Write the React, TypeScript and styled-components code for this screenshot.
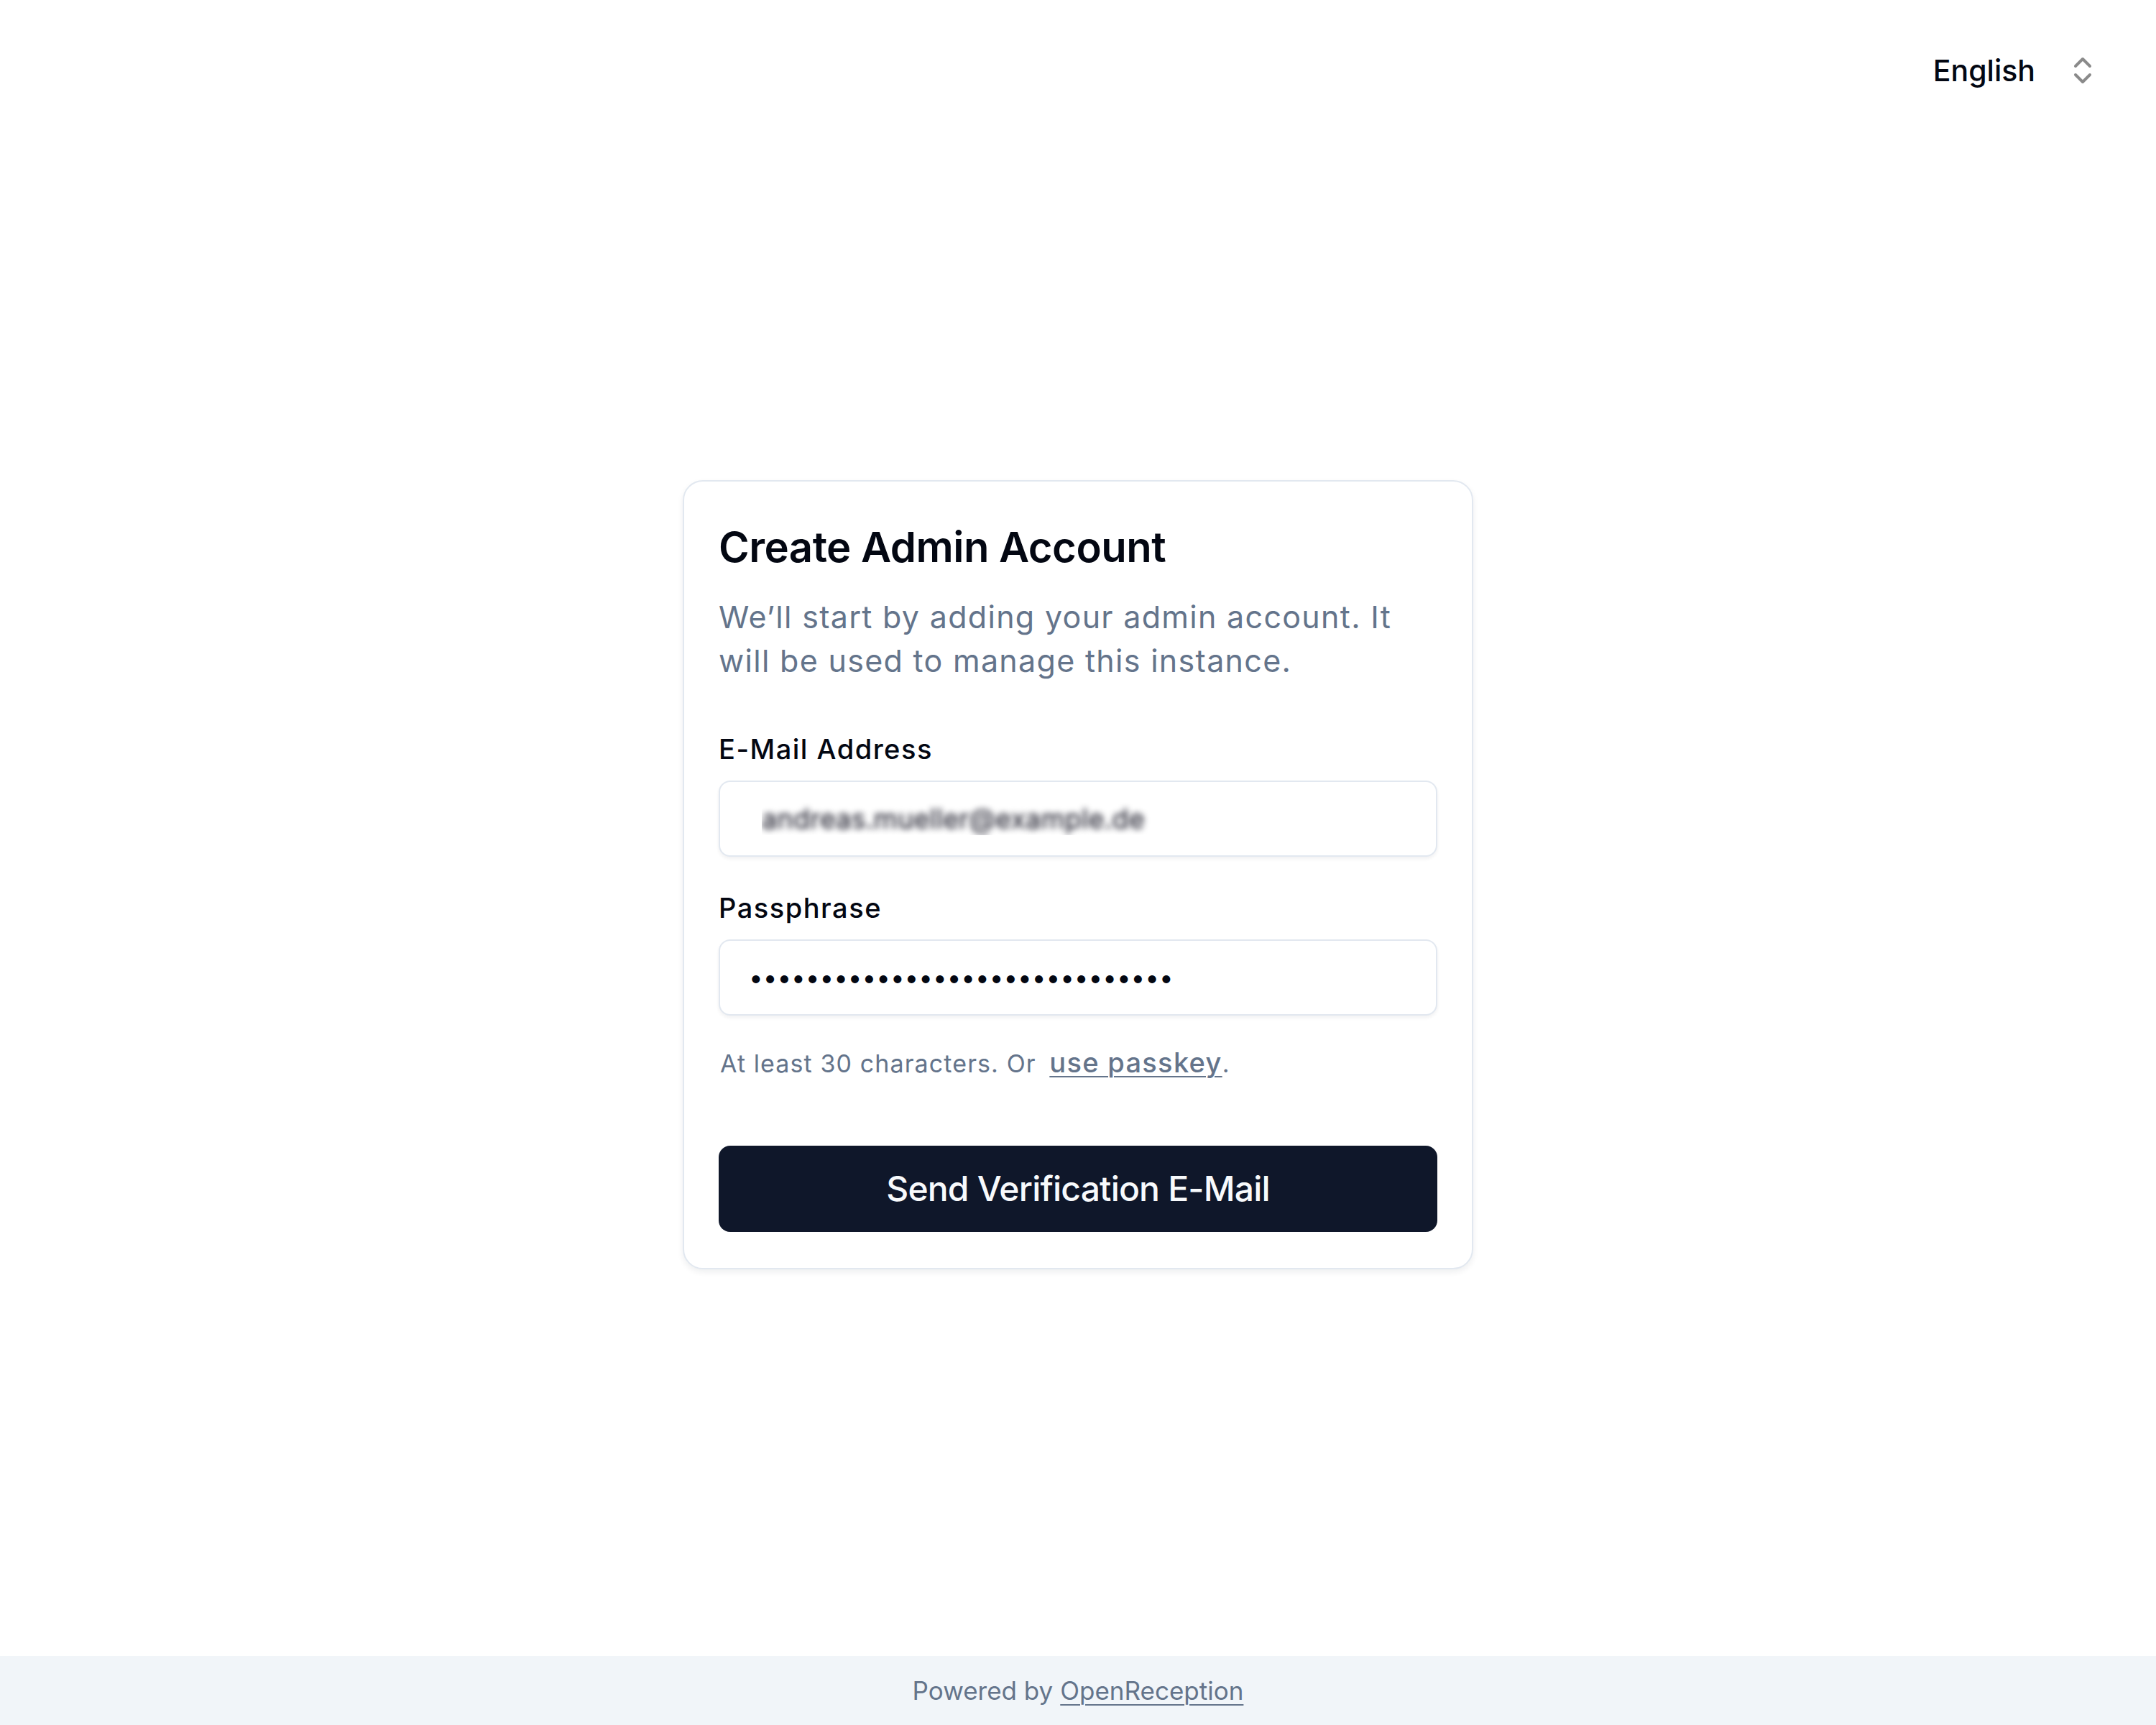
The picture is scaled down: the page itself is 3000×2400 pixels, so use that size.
import React from "react"
import styled, { createGlobalStyle } from "styled-components"
import { ChevronsUpDown } from "lucide-react"

const GlobalStyle = createGlobalStyle`
  html, body {
    margin: 0;
    padding: 0;
    background: #ffffff;
    font-family: Inter, "Noto Sans", "Liberation Sans", sans-serif;
    color: #030712;
  }
  * {
    box-sizing: border-box;
  }
`

const Page = styled.div`
  min-height: 100vh;
  display: flex;
  flex-direction: column;
`

const Header = styled.header`
  height: 129px;
  padding: 67px 78px 0;
  display: flex;
  justify-content: flex-end;
  align-items: flex-start;
`

const LanguageButton = styled.button`
  height: 62px;
  display: flex;
  align-items: center;
  gap: 42px;
  padding: 0;
  border: 0;
  background: transparent;
  font-family: inherit;
  font-size: 41px;
  font-weight: 500;
  color: #030712;
  cursor: pointer;

  svg {
    color: #8a8a8a;
  }
`

const Main = styled.main`
  flex: 1;
  display: flex;
  align-items: center;
  justify-content: center;
`

const Card = styled.section`
  width: 1100px;
  border: 2px solid #e2e8f0;
  border-radius: 28px;
  background: #ffffff;
  box-shadow: 0 4px 8px rgba(15, 23, 42, 0.07);
  padding: 56px 48px 50px;
`

const Title = styled.h1`
  margin: 0;
  font-size: 58px;
  line-height: 70px;
  font-weight: 600;
  letter-spacing: -0.5px;
  color: #030712;
`

const Description = styled.p`
  margin: 32px 0 0;
  font-size: 43px;
  line-height: 61px;
  letter-spacing: 1.3px;
  color: #64748b;
`

const Form = styled.form`
  margin-top: 69px;
  display: flex;
  flex-direction: column;
`

const Field = styled.div<{ $gap?: number }>`
  display: flex;
  flex-direction: column;
  gap: 21px;
  margin-top: ${(p) => p.$gap ?? 0}px;
`

const Label = styled.label`
  font-size: 38px;
  line-height: 46px;
  font-weight: 500;
  letter-spacing: 1.5px;
  color: #030712;
`

const Input = styled.input<{ $blurred?: boolean; $size?: number }>`
  height: 106px;
  width: 100%;
  border: 2px solid #e2e8f0;
  border-radius: 16px;
  padding: 0 ${(p) => (p.$blurred ? 58 : 40)}px;
  font-family: inherit;
  font-size: ${(p) => p.$size ?? 38}px;
  color: ${(p) => (p.$blurred ? "transparent" : "#030712")};
  text-shadow: ${(p) => (p.$blurred ? "0 0 8px rgba(15, 15, 30, 1)" : "none")};
  background: #ffffff;
  box-shadow: 0 3px 5px rgba(15, 23, 42, 0.06);
  outline: none;
`

const Hint = styled.p`
  margin: 42px 0 0;
  padding-left: 2px;
  font-size: 34px;
  line-height: 46px;
  letter-spacing: 1.1px;
  color: #64748b;
`

const PasskeyLink = styled.a`
  margin-left: 8px;
  font-size: 38px;
  font-weight: 500;
  letter-spacing: 1.3px;
  color: #64748b;
  text-decoration: underline;
  text-underline-offset: 5px;
  text-decoration-thickness: 2px;
  cursor: pointer;
`

const SubmitButton = styled.button`
  margin-top: 91px;
  height: 120px;
  width: 100%;
  border: 0;
  border-radius: 16px;
  background: #0f172a;
  color: #f8fafc;
  font-family: inherit;
  font-size: 48px;
  font-weight: 500;
  letter-spacing: -0.8px;
  cursor: pointer;
`

const Footer = styled.footer`
  height: 96px;
  background: #f1f5f9;
  display: flex;
  align-items: center;
  justify-content: center;
  font-size: 35px;
  color: #64748b;
`

const FooterLink = styled.a`
  margin-left: 10px;
  color: #64748b;
  text-decoration: underline;
  text-underline-offset: 6px;
  text-decoration-thickness: 2px;
`

export default function App() {
  return (
    <Page>
      <GlobalStyle />
      <Header>
        <LanguageButton type="button">
          English
          <ChevronsUpDown size={48} strokeWidth={2} />
        </LanguageButton>
      </Header>
      <Main>
        <Card>
          <Title>Create Admin Account</Title>
          <Description>
            We’ll start by adding your admin account. It will be used to manage this instance.
          </Description>
          <Form onSubmit={(e) => e.preventDefault()}>
            <Field>
              <Label htmlFor="email">E-Mail Address</Label>
              <Input id="email" type="email" $blurred defaultValue="andreas.mueller@example.de" />
            </Field>
            <Field $gap={48}>
              <Label htmlFor="passphrase">Passphrase</Label>
              <Input id="passphrase" type="password" $size={35} defaultValue={"x".repeat(30)} />
            </Field>
            <Hint>
              At least 30 characters. Or <PasskeyLink>use passkey</PasskeyLink>.
            </Hint>
            <SubmitButton type="submit">Send Verification E-Mail</SubmitButton>
          </Form>
        </Card>
      </Main>
      <Footer>
        Powered by <FooterLink href="#">OpenReception</FooterLink>
      </Footer>
    </Page>
  )
}
